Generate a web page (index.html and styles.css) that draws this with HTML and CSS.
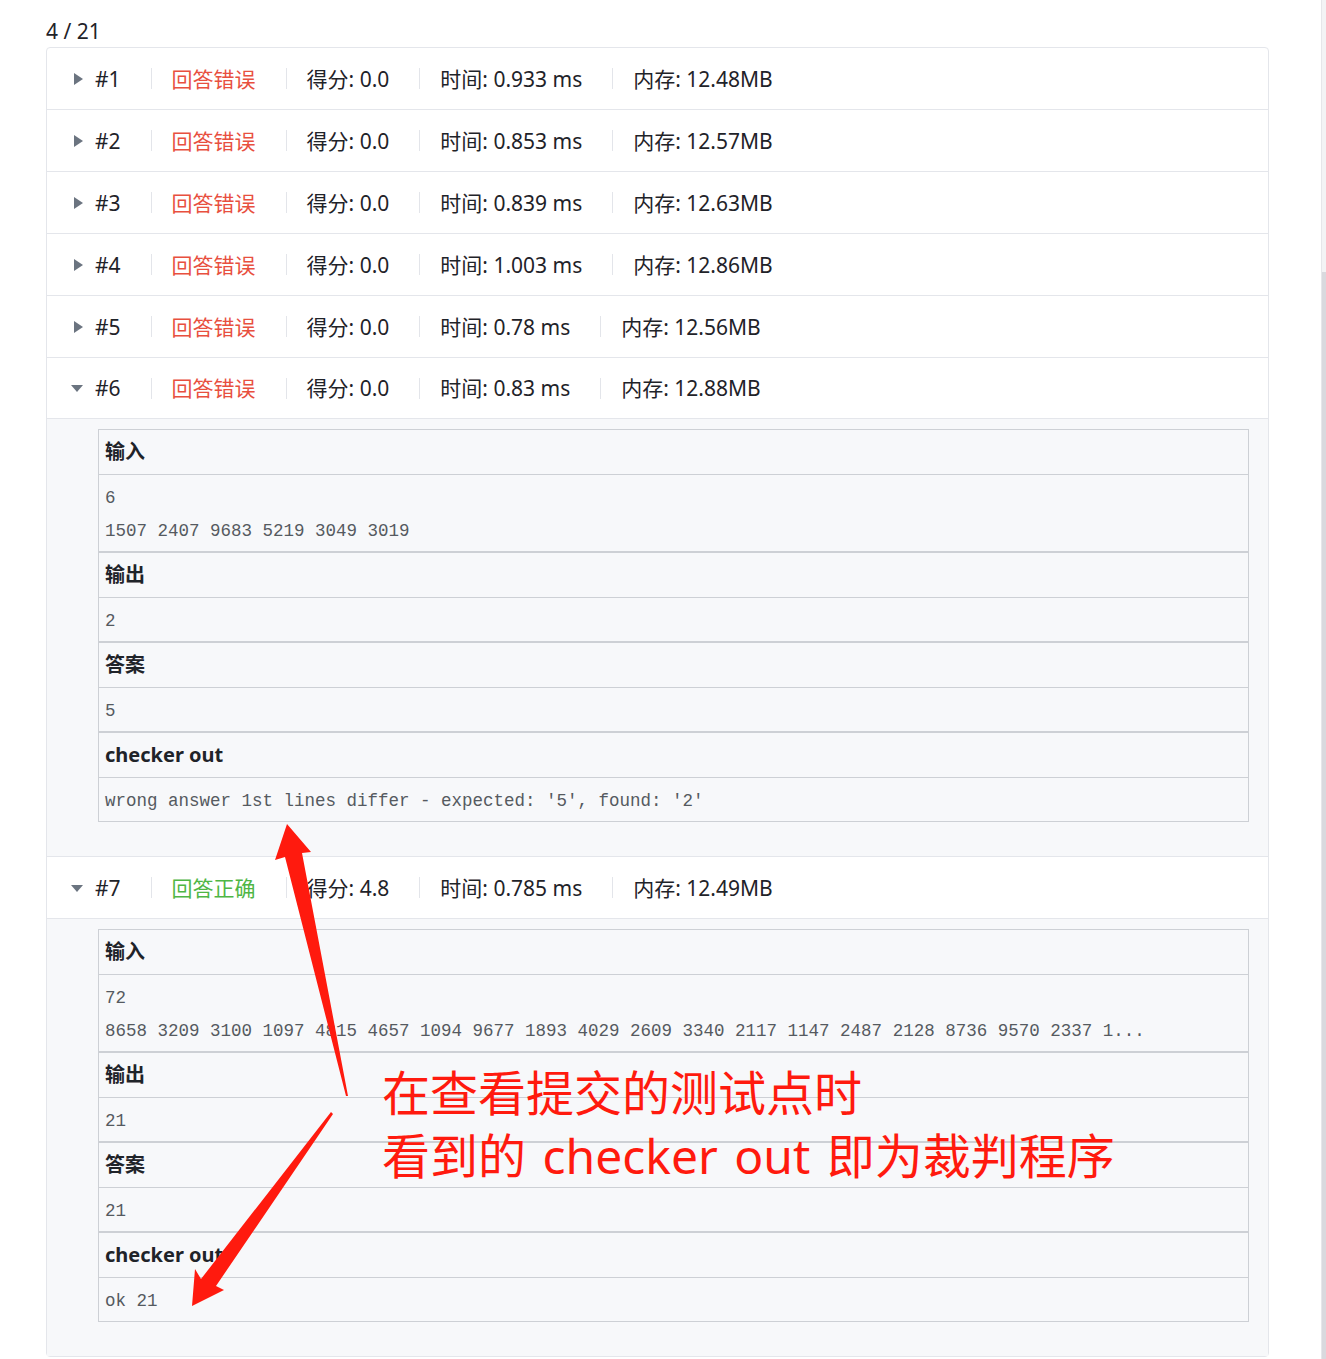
FILE: index.html
```html
<!DOCTYPE html>
<html lang="zh-CN">
<head>
<meta charset="utf-8">
<title>测试点</title>
<link rel="stylesheet" href="styles.css">
</head>
<body>
<div class="page">
  <div class="count">4 / 21</div>
  <div class="card">
    <div class="row">
      <span class="caret caret-right"></span>
      <span class="cell id">#1</span><span class="sep"></span>
      <span class="cell status wrong">回答错误</span><span class="sep"></span>
      <span class="cell">得分: 0.0</span><span class="sep"></span>
      <span class="cell">时间: 0.933 ms</span><span class="sep"></span>
      <span class="cell">内存: 12.48MB</span>
    </div>
    <div class="row">
      <span class="caret caret-right"></span>
      <span class="cell id">#2</span><span class="sep"></span>
      <span class="cell status wrong">回答错误</span><span class="sep"></span>
      <span class="cell">得分: 0.0</span><span class="sep"></span>
      <span class="cell">时间: 0.853 ms</span><span class="sep"></span>
      <span class="cell">内存: 12.57MB</span>
    </div>
    <div class="row">
      <span class="caret caret-right"></span>
      <span class="cell id">#3</span><span class="sep"></span>
      <span class="cell status wrong">回答错误</span><span class="sep"></span>
      <span class="cell">得分: 0.0</span><span class="sep"></span>
      <span class="cell">时间: 0.839 ms</span><span class="sep"></span>
      <span class="cell">内存: 12.63MB</span>
    </div>
    <div class="row">
      <span class="caret caret-right"></span>
      <span class="cell id">#4</span><span class="sep"></span>
      <span class="cell status wrong">回答错误</span><span class="sep"></span>
      <span class="cell">得分: 0.0</span><span class="sep"></span>
      <span class="cell">时间: 1.003 ms</span><span class="sep"></span>
      <span class="cell">内存: 12.86MB</span>
    </div>
    <div class="row">
      <span class="caret caret-right"></span>
      <span class="cell id">#5</span><span class="sep"></span>
      <span class="cell status wrong">回答错误</span><span class="sep"></span>
      <span class="cell">得分: 0.0</span><span class="sep"></span>
      <span class="cell">时间: 0.78 ms</span><span class="sep"></span>
      <span class="cell">内存: 12.56MB</span>
    </div>
    <div class="row row-open">
      <span class="caret caret-down"></span>
      <span class="cell id">#6</span><span class="sep"></span>
      <span class="cell status wrong">回答错误</span><span class="sep"></span>
      <span class="cell">得分: 0.0</span><span class="sep"></span>
      <span class="cell">时间: 0.83 ms</span><span class="sep"></span>
      <span class="cell">内存: 12.88MB</span>
    </div>
    <div class="detail">
      <div class="io">
        <div class="section">
          <div class="sec-head">输入</div>
          <div class="sec-body">6<br>1507 2407 9683 5219 3049 3019</div>
        </div>
        <div class="section">
          <div class="sec-head">输出</div>
          <div class="sec-body">2</div>
        </div>
        <div class="section">
          <div class="sec-head">答案</div>
          <div class="sec-body">5</div>
        </div>
        <div class="section">
          <div class="sec-head">checker out</div>
          <div class="sec-body">wrong answer 1st lines differ - expected: '5', found: '2'</div>
        </div>
      </div>
    </div>
    <div class="row row-open row-last">
      <span class="caret caret-down"></span>
      <span class="cell id">#7</span><span class="sep"></span>
      <span class="cell status right">回答正确</span><span class="sep"></span>
      <span class="cell">得分: 4.8</span><span class="sep"></span>
      <span class="cell">时间: 0.785 ms</span><span class="sep"></span>
      <span class="cell">内存: 12.49MB</span>
    </div>
    <div class="detail">
      <div class="io">
        <div class="section">
          <div class="sec-head">输入</div>
          <div class="sec-body">72<br>8658 3209 3100 1097 4815 4657 1094 9677 1893 4029 2609 3340 2117 1147 2487 2128 8736 9570 2337 1...</div>
        </div>
        <div class="section">
          <div class="sec-head">输出</div>
          <div class="sec-body">21</div>
        </div>
        <div class="section">
          <div class="sec-head">答案</div>
          <div class="sec-body">21</div>
        </div>
        <div class="section">
          <div class="sec-head">checker out</div>
          <div class="sec-body">ok 21</div>
        </div>
      </div>
    </div>
  </div>
</div>

<svg class="arrows" width="1326" height="1359" viewBox="0 0 1326 1359" xmlns="http://www.w3.org/2000/svg">
  <polygon fill="#ff1a0e" points="287,824 311,852 302,853 348,1096 346,1096 285,857 275,860"/>
  <polygon fill="#ff1a0e" points="192,1306 195,1269 201,1279 331,1112 333,1114 216,1286 224,1290"/>
</svg>
<div class="note">在查看提交的测试点时<br>看到的 checker out 即为裁判程序</div>
<div class="scrollbar"><div class="thumb"></div></div>
</body>
</html>
```
FILE: styles.css
```css
html, body {
  margin: 0;
  padding: 0;
  overflow: hidden;
  background: #ffffff;
}
body {
  position: relative;
  width: 1326px;
  height: 1359px;
  font-family: "Noto Sans", "Noto Sans CJK SC", sans-serif;
  color: #1f2329;
}
.page {
  padding: 16px 0 0 46px;
}
.count {
  font-size: 21px;
  line-height: 30px;
  color: #1f2329;
  padding-bottom: 1px;
}
.card {
  width: 1221px;
  border: 1px solid #e4e6eb;
  border-radius: 4px;
  background: #fff;
}
.row {
  height: 61px;
  border-bottom: 1px solid #e4e6eb;
  display: flex;
  align-items: center;
  padding-left: 23px;
  font-size: 21px;
  white-space: nowrap;
}
.row-open {
  height: 60px;
}
.row-last {
  height: 61px;
}
.caret {
  width: 15px;
  height: 14px;
  margin-right: 10px;
  position: relative;
  flex: none;
}
.caret::before {
  content: "";
  position: absolute;
  width: 0;
  height: 0;
}
.caret-right::before {
  left: 4px;
  top: 1px;
  border-top: 6px solid transparent;
  border-bottom: 6px solid transparent;
  border-left: 9px solid #6b7480;
}
.caret-down::before {
  left: 1px;
  top: 4px;
  border-left: 6.5px solid transparent;
  border-right: 6.5px solid transparent;
  border-top: 7px solid #6b7480;
}
.cell {
  line-height: 30px;
}
.id {
  min-width: 25px;
}
.sep {
  display: inline-block;
  width: 1px;
  height: 21px;
  background: #e3e5ea;
  margin: 0 20px 0 30px;
  flex: none;
}
.wrong {
  color: #e8503f;
}
.right {
  color: #4fb645;
}
.detail {
  background: #f7f8fa;
  padding: 10px 19px 34px 51px;
  border-bottom: 1px solid #e4e6eb;
}
.detail:last-child {
  border-bottom: none;
}
.io {
  display: flex;
  flex-direction: column;
}
.section {
  border: 1px solid #cdd0d5;
}
.sec-head {
  height: 44px;
  line-height: 44px;
  padding: 0 6px;
  border-bottom: 1px solid #cdd0d5;
  font-weight: 700;
  font-size: 20px;
  font-family: "Noto Sans", "Noto Sans CJK SC", sans-serif;
  color: #1f2329;
}
.sec-body {
  padding: 7px 6px 3px;
  line-height: 33px;
  font-family: "Liberation Mono", "Noto Sans CJK SC", monospace;
  font-size: 17.5px;
  color: #555a60;
  white-space: pre;
}
.arrows {
  position: absolute;
  left: 0;
  top: 0;
  pointer-events: none;
}
.note {
  position: absolute;
  left: 382px;
  top: 1061px;
  font-family: "Noto Sans", "Noto Sans CJK SC", sans-serif;
  font-size: 48px;
  line-height: 63px;
  word-spacing: 4px;
  color: #ff1a0e;
  white-space: nowrap;
  pointer-events: none;
}
.scrollbar {
  position: absolute;
  right: 0;
  top: 0;
  width: 4px;
  height: 1359px;
  background: #f3f3f5;
  border-left: 1px solid #e6e6ea;
}
.thumb {
  position: absolute;
  left: 0;
  right: 0;
  top: 272px;
  bottom: 0;
  background: #d9d9de;
}
```
